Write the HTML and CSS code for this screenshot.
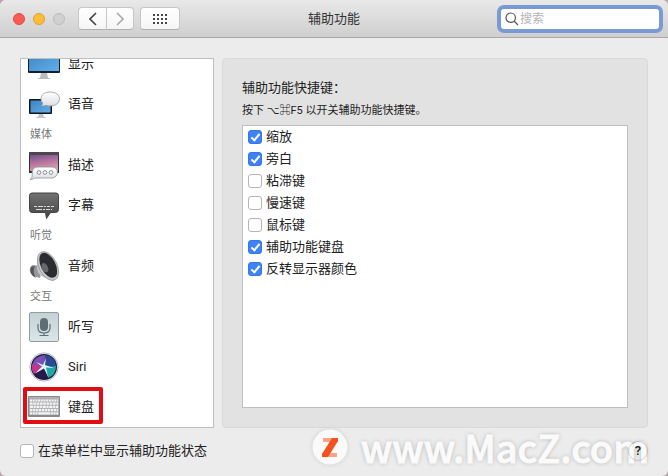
FILE: index.html
```html
<!DOCTYPE html>
<html lang="zh-CN">

<head>
    <meta charset="UTF-8">
    <meta name="viewport" content="width=device-width, initial-scale=1.0">
    <title>辅助功能</title>
    <link rel="stylesheet" href="styles.css">
</head>

<body>
    <div class="window">
        <header class="toolbar">
            <div class="controls">
                <div class="lights">
                    <button class="light red" aria-label="关闭"></button>
                    <button class="light yellow" aria-label="最小化"></button>
                    <button class="light" aria-label="缩放" disabled></button>
                </div>
                <div class="nav">
                    <button class="tool back" aria-label="后退">
                        <svg width="8" height="14" viewBox="0 0 8 14"><path d="M7 1 1 7l6 6" fill="none" stroke="#444" stroke-width="1.6"/></svg>
                    </button>
                    <button class="tool forward" aria-label="前进">
                        <svg width="8" height="14" viewBox="0 0 8 14"><path d="m1 1 6 6-6 6" fill="none" stroke="#aaa" stroke-width="1.6"/></svg>
                    </button>
                </div>
                <button class="tool all" aria-label="显示全部">
                    <svg width="14" height="10" viewBox="0 0 14 10"><path d="M0 1h14M0 5h14M0 9h14" stroke="#444" stroke-width="2" stroke-dasharray="2 2"/></svg>
                </button>
            </div>
            <h1>辅助功能</h1>
            <label class="search">
                <svg width="14" height="14" viewBox="0 0 14 14"><g fill="none" stroke="#555" stroke-width="1.2"><circle cx="5.7" cy="5.7" r="4.7"/><path d="m9 9 4 4"/></g></svg>
                <input type="search" placeholder="搜索" aria-label="搜索">
            </label>
        </header>

        <main>
            <ul class="sidebar">
                <li class="item">
                    <svg class="icon" viewBox="0 0 32 32">
                        <path d="M13 25h6l1 5h2v1H10v-1h2z" fill="#b9bbbd"/>
                        <rect y="2" width="32" height="23" rx="1" fill="#15202c"/>
                        <rect x="1" y="3" width="30" height="20" fill="url(#blue)"/>
                    </svg>
                    显示
                </li>
                <li class="item">
                    <svg class="icon" viewBox="0 0 32 32">
                        <path d="M11 26h4l1 3h2v1H8v-1h2z" fill="#c3c5c8"/>
                        <rect x="1" y="11" width="23" height="15" rx="1" fill="#10151b"/>
                        <rect x="2.500" y="12.500" width="20" height="12" fill="url(#blue)"/>
                        <path d="M22 4c6 0 9.500 3 9.500 7s-4 7-9.500 7c-1.500 0-3-.3-4-.7-1.500.7-3 .8-5 .4 1.300-.8 1.800-1.700 1.700-2.700-1.200-1-1.700-2.500-1.700-4 0-4 3.500-7 9-7z" fill="url(#bubble)" stroke="#96999d" stroke-width=".8"/>
                    </svg>
                    语音
                </li>
                <li class="group">媒体</li>
                <li class="item">
                    <svg class="icon" viewBox="0 0 32 32">
                        <rect x="1" y="3" width="30" height="21" fill="#30303a"/>
                        <rect x="1" y="3" width="30" height="3" fill="#4a484d"/>
                        <rect x="2" y="6" width="28" height="16" fill="url(#dusk)"/>
                        <path d="M10 18h14c3.500 0 5.500 2.400 5.500 5.300S27 29 24 29H10c-1.800 0-3 0-4 .3-1 .8-2 1.200-4 1.200 1.500-1 2-2 2.200-3.500V23c0-3 2.300-5 5.800-5z" fill="url(#bubble)" stroke="#8c8f96" stroke-width=".8"/>
                        <g fill="#fff" stroke="#858a94"><circle cx="11" cy="23.500" r="1.800"/><circle cx="17" cy="23.500" r="1.800"/><circle cx="23" cy="23.500" r="1.800"/></g>
                    </svg>
                    描述
                </li>
                <li class="item">
                    <svg class="icon" viewBox="0 0 32 32">
                        <path d="M4 4h24q2.500 0 2.500 2.500v14q0 3-3 3h-5l-4 6-1-6H4q-2.500 0-2.500-3V6.500Q1.500 4 4 4z" fill="url(#dark)" stroke="#444"/>
                        <path d="M6 17.500h20" stroke="#ddd" stroke-dasharray="3 1 5 1 2 1"/>
                        <path d="M8 20.500h16" stroke="#ddd" stroke-dasharray="6 1 2 1 4 1"/>
                    </svg>
                    字幕
                </li>
                <li class="group">听觉</li>
                <li class="item">
                    <svg class="icon" viewBox="0 0 32 32">
                        <path d="M4 15q-5 6 1 11l7 2 3-12z" fill="#96989c"/>
                        <path d="M3 17q-2 5 2 9l3 2q-4-6-1-12z" fill="#55575b"/>
                        <path d="M11 3 9 15q-1 8 6 12l11 4z" fill="#c5c7ca"/>
                        <g transform="rotate(-27 20 16)">
                            <ellipse cx="20" cy="16" rx="9" ry="15.500" fill="#c9cacd" stroke="#808286" stroke-width=".6"/>
                            <ellipse cx="20.500" cy="15.500" rx="7.300" ry="13.500" fill="#2b2c2f"/>
                            <ellipse cx="16.500" cy="16" rx="3" ry="5" fill="#66686c"/>
                        </g>
                    </svg>
                    音频
                </li>
                <li class="group">交互</li>
                <li class="item">
                    <svg class="icon" viewBox="0 0 32 32">
                        <rect x="1.500" y="1.500" width="29" height="29" rx="1.500" fill="url(#plate)" stroke="#929da2"/>
                        <rect x="12" y="7" width="8" height="13" rx="4" fill="#5f6e75"/>
                        <path d="M10 13v4q0 5 6 5t6-5v-4M16 22v2.500M11.500 24.500h9" fill="none" stroke="#5f6e75" stroke-width="1.200"/>
                    </svg>
                    听写
                </li>
                <li class="item">
                    <svg class="icon" viewBox="0 0 32 32">
                        <circle cx="16" cy="16" r="14.200" fill="#eee" stroke="#aaafb9" stroke-width=".8"/>
                        <circle cx="16" cy="16" r="13" fill="#1c1a3c"/>
                        <path d="M16 16 4 16Q5 5 17 4q2 6-1 12z" fill="#7d4fb0"/>
                        <path d="M16 16 17 4q10 1 11 11-6 3-12 1z" fill="#2c4a94"/>
                        <path d="M16 16q7 0 12-1 0 9-8 12z" fill="#1fa9a4"/>
                        <path d="M16 16 4 13q-1 6 2 10 6-1 10-7z" fill="#c4338c"/>
                        <path d="M16 16Q11 21 6 23q5 7 14 4z" fill="#271b4c"/>
                        <path d="m8 11 7 3 3-7-1 7 9 3-8-.5 2 9-4-8-9 5 7-7z" fill="#d9f6ff"/>
                    </svg>
                    Siri
                </li>
                <li class="item marked">
                    <svg class="icon" viewBox="0 0 32 32">
                        <rect y="5" width="32" height="21" rx="1" fill="#88898b"/>
                        <rect x="1" y="6" width="30" height="18" fill="#b0b1b3"/>
                        <g stroke="#f4f4f4" stroke-width="2.200">
                            <path d="M2 9.500h28" stroke-dasharray="2 .7"/>
                            <path d="M2 12.700h28" stroke-dasharray="2.600 .7"/>
                            <path d="M2 15.900h28" stroke-dasharray="3 .7 2 .7"/>
                            <path d="M2 19.100h28" stroke-dasharray="2.300 .7"/>
                            <path d="M2 22.300h28" stroke-dasharray="2 .7 2 .7 2 .7 12 .7 2 .7"/>
                        </g>
                    </svg>
                    键盘
                </li>
            </ul>

            <section class="panel">
                <h2>辅助功能快捷键：</h2>
                <p>按下 ⌥⌘F5 以开关辅助功能快捷键。</p>
                <div class="shortcuts">
                    <label class="check"><input type="checkbox" checked>缩放</label>
                    <label class="check"><input type="checkbox" checked>旁白</label>
                    <label class="check"><input type="checkbox">粘滞键</label>
                    <label class="check"><input type="checkbox">慢速键</label>
                    <label class="check"><input type="checkbox">鼠标键</label>
                    <label class="check"><input type="checkbox" checked>辅助功能键盘</label>
                    <label class="check"><input type="checkbox" checked>反转显示器颜色</label>
                </div>
            </section>
        </main>

        <footer>
            <label class="check"><input type="checkbox">在菜单栏中显示辅助功能状态</label>
            <button class="help" aria-label="帮助">?</button>
        </footer>

        <div class="watermark">
            <svg width="36" height="36" viewBox="0 0 36 36">
                <circle cx="18" cy="18" r="17.500" fill="#fafafa"/>
                <path d="M11 9h15v4H11zM10 24h15v4H10z" fill="#f8a488"/>
                <path d="M20 9h6v3L16 28h-6v-3z" fill="#f4511e"/>
            </svg>
            <span>www.MacZ.com</span>
        </div>
    </div>

    <!-- shared gradients -->
    <svg class="defs" width="0" height="0">
        <defs>
            <linearGradient id="blue" x2="1" y2="1"><stop stop-color="#3c83c4"/><stop offset="1" stop-color="#62aee8"/></linearGradient>
            <linearGradient id="bubble" x2="0" y2="1"><stop stop-color="#fff"/><stop offset="1" stop-color="#dcdee2"/></linearGradient>
            <linearGradient id="dusk" x2=".3" y2="1"><stop stop-color="#70528e"/><stop offset=".6" stop-color="#bd789f"/><stop offset="1" stop-color="#d9a0a5"/></linearGradient>
            <linearGradient id="dark" x2="0" y2="1"><stop stop-color="#727272"/><stop offset="1" stop-color="#444"/></linearGradient>
            <linearGradient id="plate" x2="0" y2="1"><stop stop-color="#c3d1d6"/><stop offset="1" stop-color="#dbe6e8"/></linearGradient>
        </defs>
    </svg>
</body>

</html>
```

FILE: styles.css
```css
*,
*::after {
    margin: 0;
    padding: 0;
    box-sizing: border-box;
}

body {
    background-color: #b9a5ae;
    font-family: Roboto, "Noto Sans CJK SC", "DejaVu Sans", sans-serif;
    font-size: 13px;
    line-height: 20px;
    color: #222;
}

button,
input {
    font: inherit;
}

svg {
    display: block;
}

.window {
    position: relative;
    display: flex;
    flex-direction: column;
    height: 100vh;
    background-color: #ececec;
    border-radius: 6px;
    overflow: hidden;
}

/* toolbar */

.toolbar {
    display: grid;
    grid-template-columns: 1fr auto 1fr;
    align-items: center;
    flex: 0 0 38px;
    padding: 0 9px;
    background: linear-gradient(#e8e8e8, #cfcfcf);
    border-bottom: 1px solid #a9a9a9;
}

.controls {
    display: flex;
    align-items: center;
    padding-left: 4px;
}

.lights {
    display: flex;
    gap: 8px;
    margin-right: 13px;
}

.light {
    width: 12px;
    height: 12px;
    border: 1px solid #bcbcbc;
    border-radius: 50%;
    background-color: #d0d0d0;
}

.light.red {
    background-color: #fc5b54;
    border-color: #dd4c46;
}

.light.yellow {
    background-color: #fdbd35;
    border-color: #dba033;
}

.nav {
    display: flex;
    margin-right: 6px;
}

.tool {
    display: flex;
    align-items: center;
    justify-content: center;
    width: 28px;
    height: 23px;
    border: 1px solid #c6c6c6;
    border-bottom-color: #b0b0b0;
    border-radius: 4px;
    background: linear-gradient(#fff, #f5f5f5);
}

.back {
    border-right: 0;
    border-radius: 4px 0 0 4px;
}

.forward {
    border-radius: 0 4px 4px 0;
}

.all {
    width: 40px;
}

h1 {
    font-size: 13px;
    font-weight: 400;
    color: #333;
}

.search {
    display: flex;
    align-items: center;
    justify-self: end;
    gap: 1px;
    width: 158px;
    height: 20px;
    padding: 0 4px;
    background-color: #fff;
    border-radius: 3px;
    box-shadow: 0 0 0 4px #7a9ad5;
}

.search input {
    flex: 1;
    min-width: 0;
    height: 20px;
    border: 0;
    outline: 0;
    background: none;
    font-size: 12px;
    appearance: none;
}

.search input::placeholder {
    color: #b4b4b4;
}

/* content */

main {
    display: flex;
    flex: 1;
    gap: 8px;
    min-height: 0;
    padding: 20px 20px 0;
}

.sidebar {
    display: flex;
    flex-direction: column;
    justify-content: flex-end;
    flex: 0 0 194px;
    overflow: hidden;
    list-style: none;
    background-color: #fff;
    border: 1px solid #bfbfbf;
}

.item {
    position: relative;
    display: flex;
    align-items: center;
    flex: 0 0 40px;
    gap: 8px;
    padding-left: 7px;
}

.icon {
    width: 32px;
    height: 32px;
}

.group {
    flex: 0 0 21px;
    padding: 1px 0 0 9px;
    font-size: 11px;
    color: #777;
}

.marked::after {
    content: "";
    position: absolute;
    top: 0;
    left: 2px;
    width: 80px;
    height: 37px;
    border: 4px solid #e20d12;
    border-radius: 2px;
}

.panel {
    display: flex;
    flex-direction: column;
    flex: 1;
    padding: 19px;
    background-color: #e2e2e2;
    border: 1px solid #d9d9d9;
    border-radius: 4px;
}

h2 {
    font-size: 13px;
    font-weight: 400;
}

.panel p {
    margin: 3px 0 4px;
    font-size: 11px;
}

.shortcuts {
    flex: 1;
    padding-left: 5px;
    background-color: #fff;
    border: 1px solid #bfbfbf;
}

.check {
    display: flex;
    align-items: center;
    gap: 4px;
    height: 22px;
}

.check input {
    position: relative;
    width: 14px;
    height: 14px;
    border: 1px solid #b5b5b5;
    border-radius: 3px;
    background-color: #fff;
    appearance: none;
}

.check input:checked {
    border-color: #3576ea;
    background-color: #3f82f5;
}

.check input:checked::after {
    content: "";
    position: absolute;
    top: 1px;
    left: 4px;
    width: 5px;
    height: 9px;
    border: solid #fff;
    border-width: 0 2px 2px 0;
    transform: rotate(40deg);
}

/* bottom row */

footer {
    display: flex;
    align-items: center;
    justify-content: space-between;
    flex: 0 0 48px;
    padding: 0 20px 2px;
}

.help {
    position: relative;
    z-index: 1;
    width: 20px;
    height: 20px;
    border: 1px solid rgba(0, 0, 0, .15);
    border-radius: 50%;
    background: none;
    font-weight: 500;
    line-height: 18px;
    color: #222;
}

.watermark {
    position: absolute;
    right: 19px;
    bottom: 9px;
    display: flex;
    align-items: center;
    gap: 13px;
    font-family: "Noto Sans CJK SC", sans-serif;
    font-size: 38px;
    font-weight: 500;
    line-height: 40px;
    color: #fafafa;
    -webkit-text-stroke: 1px #fafafa;
    text-shadow: 0 0 4px #aaa;
    pointer-events: none;
}

.watermark svg {
    filter: drop-shadow(0 0 2px #ccc);
}

.defs {
    position: absolute;
}
```
